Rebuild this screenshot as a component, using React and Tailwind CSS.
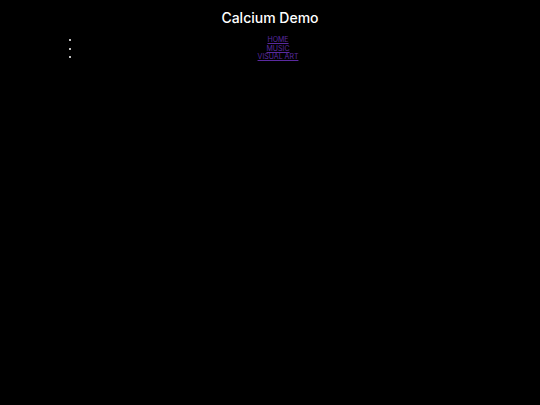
export default function App() {
  const links = ["HOME", "MUSIC", "VISUAL ART"];
  return (
    <div
      className="min-h-[405px] bg-black text-white"
      style={{ fontFamily: "Inter, 'Noto Sans', sans-serif" }}
    >
      <h1 className="pt-[9px] text-center text-[14px] font-medium leading-[18px]">
        Calcium Demo
      </h1>
      <ul className="ml-[40px] mt-[9px] w-[436px] list-disc pl-10 text-[7px] leading-[8.5px]">
        {links.map((l) => (
          <li key={l} className="text-center">
            <a href="#" className="text-[#5b2aa0] underline">
              {l}
            </a>
          </li>
        ))}
      </ul>
    </div>
  );
}
